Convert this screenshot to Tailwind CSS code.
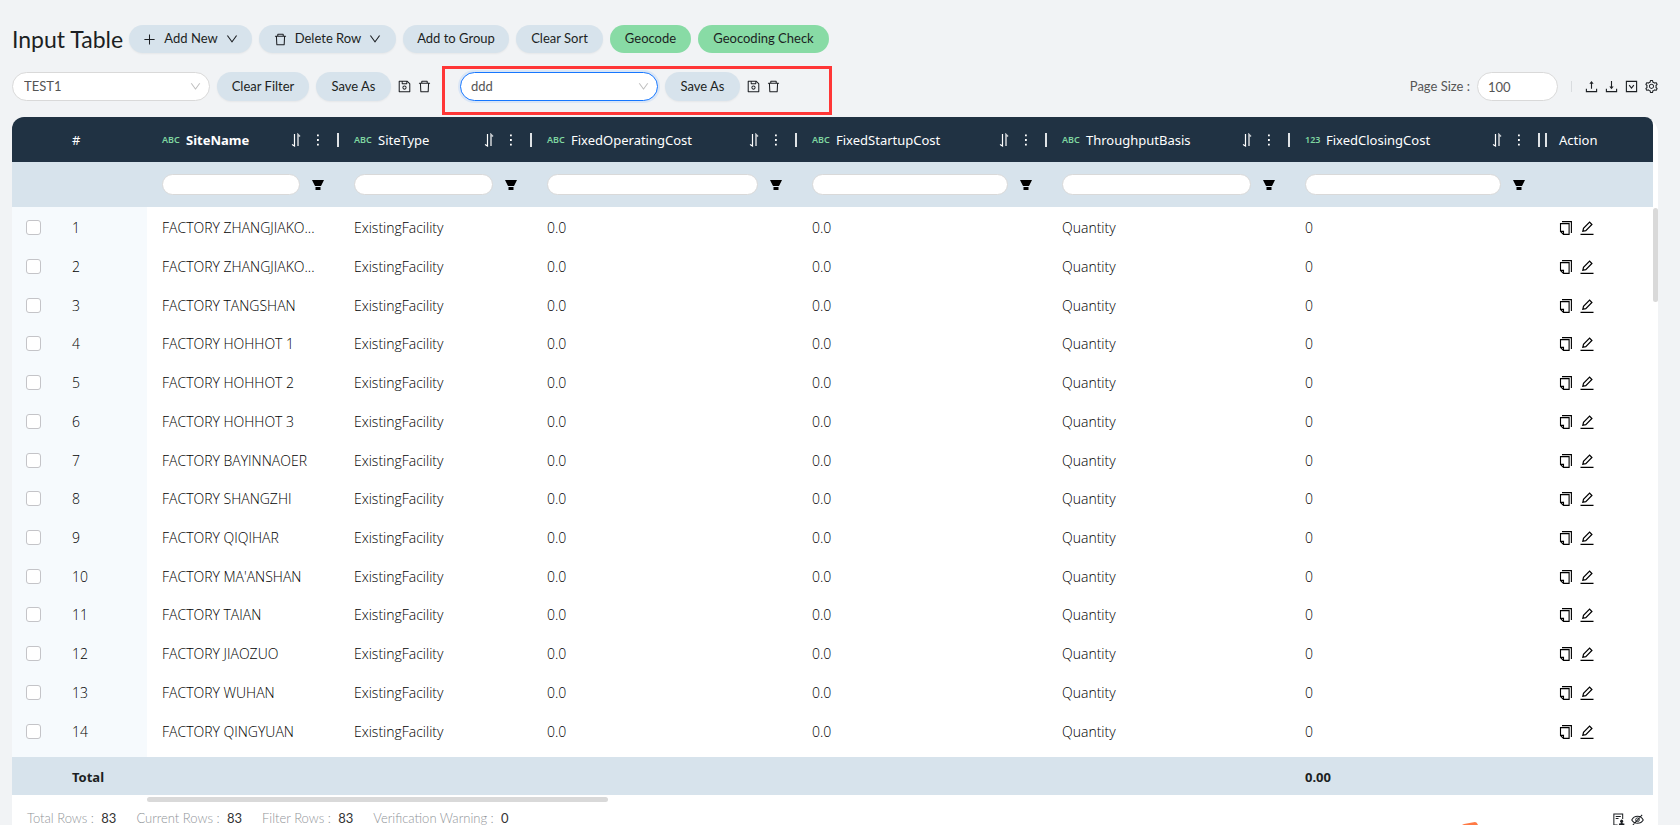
<!DOCTYPE html>
<html lang="en">
<head>
  <meta charset="UTF-8" />
  <meta name="viewport" content="width=device-width, initial-scale=1.0" />
  <script src="https://cdn.jsdelivr.net/npm/@tailwindcss/browser@4"></script>
  <title>Input Table</title>
</head>
<body class="h-screen overflow-hidden bg-[#f1f3f5] font-['Lato',sans-serif] text-[13px] text-[#1c1f23]">

  <!-- Icon sprite -->
  <svg class="hidden" aria-hidden="true">
    <symbol id="i-trash" viewBox="64 64 896 896"><path fill="currentColor" d="M360 184h-8c4.4 0 8-3.6 8-8v8h304v-8c0 4.4 3.6 8 8 8h-8v72h72v-80c0-35.3-28.7-64-64-64H352c-35.3 0-64 28.7-64 64v80h72v-72zm504 72H160c-17.7 0-32 14.3-32 32v32c0 4.4 3.6 8 8 8h60.4l24.7 523c1.6 34.1 29.8 61 63.9 61h454c34.2 0 62.3-26.8 63.9-61l24.7-523H888c4.4 0 8-3.6 8-8v-32c0-17.7-14.3-32-32-32zM731.3 840H292.7l-24.2-512h487l-24.2 512z"/></symbol>
    <symbol id="i-save" viewBox="64 64 896 896"><path fill="currentColor" d="M893.3 293.3L730.7 130.7c-7.5-7.5-16.7-13-26.7-16V112H144c-17.7 0-32 14.3-32 32v736c0 17.7 14.3 32 32 32h736c17.7 0 32-14.3 32-32V338.5c0-17-6.7-33.2-18.7-45.2zM384 184h256v104H384V184zm456 656H184V184h136v136c0 17.7 14.3 32 32 32h320c17.7 0 32-14.3 32-32V205.8l136 136V840zM512 442c-79.5 0-144 64.5-144 144s64.5 144 144 144 144-64.5 144-144-64.5-144-144-144zm0 224c-44.2 0-80-35.8-80-80s35.8-80 80-80 80 35.8 80 80-35.8 80-80 80z"/></symbol>
    <symbol id="i-down" viewBox="64 64 896 896"><path fill="currentColor" d="M884 256h-75c-5.1 0-9.9 2.5-12.9 6.6L512 654.2 227.9 262.6c-3-4.1-7.8-6.6-12.9-6.6h-75c-6.5 0-10.3 7.4-6.5 12.7l352.6 486.1c12.8 17.6 39 17.6 51.7 0l352.6-486.1c3.9-5.3.1-12.7-6.4-12.7z"/></symbol>
    <symbol id="i-plus" viewBox="0 0 14 14"><path fill="none" stroke="currentColor" stroke-width="1.1" d="M7 1.5v11M1.5 7h11"/></symbol>
    <symbol id="i-upload" viewBox="0 0 14 14"><path fill="none" stroke="currentColor" stroke-width="1.2" d="M1.500 9.500v3h11v-3M7 9.500V2.500"/><path fill="currentColor" d="M7 1l2.300 3H4.700z"/></symbol>
    <symbol id="i-download" viewBox="0 0 14 14"><path fill="none" stroke="currentColor" stroke-width="1.2" d="M1.500 9.500v3h11v-3M7 1v7"/><path fill="currentColor" d="M7 10L4.700 7h4.600z"/></symbol>
    <symbol id="i-box" viewBox="0 0 14 14"><path fill="none" stroke="currentColor" stroke-width="1.2" d="M1.500 1.500h11v11h-11zM4.500 5.500L7 8.700l2.500-3.200"/></symbol>
    <symbol id="i-gear" viewBox="64 64 896 896"><path fill="currentColor" d="M924.8 625.7l-65.5-56c3.1-19 4.7-38.4 4.7-57.8s-1.6-38.8-4.7-57.8l65.5-56a32.03 32.03 0 009.3-35.2l-.9-2.6a443.74 443.74 0 00-79.7-137.9l-1.8-2.1a32.12 32.12 0 00-35.1-9.5l-81.3 28.9c-30-24.6-63.5-44-99.7-57.6l-15.7-85a32.05 32.05 0 00-25.8-25.7l-2.7-.5c-52.1-9.4-106.9-9.4-159 0l-2.7.5a32.05 32.05 0 00-25.8 25.7l-15.8 85.4a351.86 351.86 0 00-99 57.4l-81.9-29.1a32 32 0 00-35.1 9.5l-1.8 2.1a446.02 446.02 0 00-79.7 137.9l-.9 2.6c-4.5 12.5-.8 26.5 9.3 35.2l66.3 56.6c-3.1 18.8-4.6 38-4.6 57.1 0 19.2 1.5 38.4 4.6 57.1L99 625.5a32.03 32.03 0 00-9.3 35.2l.9 2.6c18.1 50.4 44.9 96.9 79.7 137.9l1.8 2.1a32.12 32.12 0 0035.1 9.5l81.9-29.1c29.8 24.5 63.1 43.9 99 57.4l15.8 85.4a32.05 32.05 0 0025.8 25.7l2.7.5a449.4 449.4 0 00159 0l2.7-.5a32.05 32.05 0 0025.8-25.7l15.7-85a350 350 0 0099.7-57.6l81.3 28.9a32 32 0 0035.1-9.5l1.8-2.1c34.8-41.1 61.6-87.5 79.7-137.9l.9-2.6c4.5-12.3.8-26.3-9.3-35zM788.3 465.9c2.5 15.1 3.8 30.6 3.8 46.1s-1.3 31-3.8 46.1l-6.6 40.1 74.7 63.9a370.03 370.03 0 01-42.6 73.6L721 702.8l-31.4 25.8c-23.9 19.6-50.5 35-79.3 45.8l-38.1 14.3-17.9 97a377.5 377.5 0 01-85 0l-17.9-97.2-37.8-14.5c-28.5-10.8-55-26.2-78.7-45.7l-31.4-25.9-93.4 33.2c-17-22.9-31.2-47.6-42.6-73.6l75.5-64.5-6.5-40c-2.4-14.9-3.7-30.3-3.7-45.5 0-15.3 1.2-30.6 3.7-45.5l6.5-40-75.5-64.5c11.3-26.1 25.6-50.7 42.6-73.6l93.4 33.2 31.4-25.9c23.7-19.5 50.2-34.9 78.7-45.7l37.9-14.3 17.9-97.2c28.1-3.2 56.8-3.2 85 0l17.9 97 38.1 14.3c28.7 10.8 55.4 26.2 79.3 45.8l31.4 25.8 92.8-32.9c17 22.9 31.2 47.6 42.6 73.6L781.8 426l6.5 39.9zM512 326c-97.2 0-176 78.8-176 176s78.8 176 176 176 176-78.8 176-176-78.8-176-176-176zm79.2 255.2A111.6 111.6 0 01512 614c-29.9 0-58-11.7-79.2-32.8A111.6 111.6 0 01400 502c0-29.9 11.7-58 32.8-79.2C454 401.6 482.1 390 512 390c29.9 0 58 11.6 79.2 32.8A111.6 111.6 0 01624 502c0 29.9-11.7 58-32.8 79.2z"/></symbol>
    <symbol id="i-sort" viewBox="0 0 10 14"><path fill="none" stroke="currentColor" stroke-width="1.2" d="M3.500 1v12L1 11.500"/><path fill="none" stroke="currentColor" stroke-width="1.600" opacity=".75" d="M7 13V1.500L9 3.500"/></symbol>
    <symbol id="i-dots" viewBox="0 0 4 14"><path fill="currentColor" d="M1 1.500h1.800v1.800H1zM1 6.100h1.800v1.800H1zM1 10.700h1.800v1.800H1z"/></symbol>
    <symbol id="i-funnel" viewBox="0 0 12 12"><path fill="currentColor" d="M0 1h12L9 7H3zM3.500 8h5v3h-5z"/></symbol>
    <symbol id="i-copy" viewBox="0 0 14 14"><path fill="none" stroke="currentColor" stroke-width="1.1" d="M3 .6h9.400V12M1.500 2.600h8.600v10.800H4.500l-3-3zM1.500 10.400h3v3"/></symbol>
    <symbol id="i-edit" viewBox="0 0 14 14"><path fill="none" stroke="currentColor" stroke-width="1.200" d="M2.800 10.300l.7-3L9.600 1.200l2.300 2.300L5.800 9.600zM.5 13.300h13"/></symbol>
    <symbol id="i-audit" viewBox="0 0 14 14"><path fill="none" stroke="currentColor" stroke-width="1.100" d="M6 13H2V1h9.500v5.500M4 3.800h5.500M4 6h3"/><path fill="currentColor" d="M7.500 13.500v-2.200h1.500l.7-1a1.600 1.600 0 111.400 0l.6 1h1.600v2.200z"/></symbol>
    <symbol id="i-hidden" viewBox="0 0 14 14"><path fill="none" stroke="currentColor" stroke-width="1.100" d="M.8 7.500C3.500 2.300 10.500 2.300 13.200 7.500 10.500 12.200 3.500 12.200.8 7.500zM2 13L12 2"/><circle cx="7" cy="7.300" r="2" fill="none" stroke="currentColor"/></symbol>
  </svg>

  <div class="flex h-full flex-col pl-3 pr-[22px] pt-[25px]">

    <!-- Title + main actions -->
    <div class="flex h-7 items-center gap-[7px]">
      <h1 class="w-[110px] whitespace-nowrap text-[23px]">Input Table</h1>
      <button class="flex h-7 w-[123px] items-center justify-center gap-2 rounded-full bg-[#d7e3ec] shadow-xs"><svg class="size-[13px]"><use href="#i-plus" /></svg>Add New<svg class="size-3"><use href="#i-down" /></svg></button>
      <button class="flex h-7 w-[137px] items-center justify-center gap-2 rounded-full bg-[#d7e3ec] shadow-xs"><svg class="size-[13px]"><use href="#i-trash" /></svg>Delete Row<svg class="size-3"><use href="#i-down" /></svg></button>
      <button class="h-7 w-[106px] rounded-full bg-[#d7e3ec] shadow-xs">Add to Group</button>
      <button class="h-7 w-[87px] rounded-full bg-[#d7e3ec] shadow-xs">Clear Sort</button>
      <button class="h-7 w-[81px] rounded-full bg-[#88dba5]">Geocode</button>
      <button class="h-7 w-[131px] rounded-full bg-[#88dba5]">Geocoding Check</button>
    </div>

    <!-- Filters, saved sorts, page size -->
    <div class="mt-[13px] flex h-[49px] items-center">
      <div class="flex items-center gap-[7px] pb-2">
        <div class="relative">
          <select aria-label="Saved filter" class="h-[29px] w-[198px] appearance-none rounded-full border border-[#d9d9d9] bg-white px-[11px] text-[#555]"><option>TEST1</option></select>
          <svg class="pointer-events-none absolute right-[9px] top-[9px] size-[11px] text-[#bfbfbf]"><use href="#i-down" /></svg>
        </div>
        <button class="h-[29px] w-[92px] rounded-full bg-[#d7e3ec] shadow-xs">Clear Filter</button>
        <button class="h-[29px] w-[75px] rounded-full bg-[#d7e3ec] shadow-xs">Save As</button>
        <button aria-label="Save filter"><svg class="size-[13px]"><use href="#i-save" /></svg></button>
        <button aria-label="Delete filter"><svg class="size-[13px]"><use href="#i-trash" /></svg></button>
      </div>

      <div class="ml-[11px] flex h-[49px] w-[390px] items-center gap-[7px] border-3 border-[#ff3636] pb-2 pl-[15px]">
        <div class="relative">
          <select aria-label="Saved sort" class="h-[29px] w-[198px] appearance-none rounded-full border border-[#1677ff] bg-white px-[10px] text-[#555] ring-2 ring-[#1677ff]/10"><option>ddd</option></select>
          <svg class="pointer-events-none absolute right-[9px] top-[9px] size-[11px] text-[#bfbfbf]"><use href="#i-down" /></svg>
        </div>
        <button class="h-[29px] w-[75px] rounded-full bg-[#d7e3ec] shadow-xs">Save As</button>
        <button aria-label="Save sort"><svg class="size-[13px]"><use href="#i-save" /></svg></button>
        <button aria-label="Delete sort"><svg class="size-[13px]"><use href="#i-trash" /></svg></button>
      </div>

      <div class="ml-auto flex items-center gap-[7px] pb-2">
        <label for="pageSize" class="text-[#555]">Page Size :</label>
        <input id="pageSize" type="text" value="100" class="h-[29px] w-[81px] rounded-full border border-[#d9d9d9] bg-white px-[10px] text-[#555]">
        <span class="mx-[6px] h-[11px] w-px bg-[#d9dcdf]"></span>
        <button aria-label="Upload"><svg class="size-[13px]"><use href="#i-upload" /></svg></button>
        <button aria-label="Download"><svg class="size-[13px]"><use href="#i-download" /></svg></button>
        <button aria-label="Columns"><svg class="size-[13px]"><use href="#i-box" /></svg></button>
        <button aria-label="Settings"><svg class="size-[13px]"><use href="#i-gear" /></svg></button>
      </div>
    </div>

    <!-- Table card -->
    <div class="mt-[2px] flex flex-1 flex-col rounded-t-2xl bg-white">
      <div class="flex">
        <div class="min-w-0 flex-1 overflow-hidden rounded-tl-xl rounded-tr-lg">
          <table class="h-[678px] w-full table-fixed border-collapse text-left font-['Noto_Sans',sans-serif] text-[13px]">
            <colgroup>
              <col class="w-[45px]"><col class="w-[90px]"><col class="w-[192px]"><col class="w-[193px]"><col class="w-[265px]"><col class="w-[250px]"><col class="w-[243px]"><col class="w-[250px]"><col>
            </colgroup>
            <thead>
              <tr id="headRow" class="h-[45px] bg-[#203243] text-white">
                <td></td>
                <th class="pl-[15px] pt-[3px] font-normal">#</th>
              </tr>
              <tr id="filterRow" class="h-[45px] bg-[#d7e3ec]">
                <td></td>
                <td></td>
              </tr>
            </thead>
            <tbody id="rows" class="font-['Open_Sans',sans-serif] text-sm font-light text-black"></tbody>
            <tfoot>
              <tr class="h-[38px] bg-[#d7e3ec] font-bold">
                <td></td>
                <td class="pl-[15px] pt-1">Total</td>
                <td></td><td></td><td></td><td></td><td></td>
                <td class="pl-[15px] pt-1">0.00</td>
                <td></td>
              </tr>
            </tfoot>
          </table>
        </div>
        <!-- Vertical scrollbar -->
        <div class="w-[5px] pt-[91px]"><div class="h-[94px] rounded-full bg-[#d9d9d9]"></div></div>
      </div>

      <!-- Horizontal scrollbar -->
      <div class="ml-[135px] mt-[2px] h-[5px] w-[461px] rounded-full bg-[#d9d9d9]"></div>

      <!-- Row counters -->
      <div class="mt-[7px] flex h-5 items-center gap-5 pl-[15px] pr-[14px] text-[#909498]">
        <span><span class="font-light">Total Rows :</span> <span class="ml-1 text-[#333]">83</span></span>
        <span><span class="font-light">Current Rows :</span> <span class="ml-1 text-[#333]">83</span></span>
        <span><span class="font-light">Filter Rows :</span> <span class="ml-1 text-[#333]">83</span></span>
        <span><span class="font-light">Verification Warning :</span> <span class="ml-1 text-[#333]">0</span></span>
        <div class="ml-auto flex gap-[6px] text-[#1c1f23]">
          <button aria-label="Audit"><svg class="size-[13px]"><use href="#i-audit" /></svg></button>
          <button aria-label="Hide"><svg class="size-[13px]"><use href="#i-hidden" /></svg></button>
        </div>
      </div>
    </div>
  </div>

  <!-- Floating helper peeking in from below -->
  <svg class="fixed bottom-0 right-[202px] h-[3px] w-4 text-[#ff7a45]" viewBox="0 0 16 3"><path fill="currentColor" d="M0 3L2 2l11-2q2 0 3 3z"/></svg>

  <script>
    const columns = [
      ["ABC", "SiteName"],
      ["ABC", "SiteType"],
      ["ABC", "FixedOperatingCost"],
      ["ABC", "FixedStartupCost"],
      ["ABC", "ThroughputBasis"],
      ["123", "FixedClosingCost"],
    ];
    const sites = ["ZHANGJIAKO...", "ZHANGJIAKO...", "TANGSHAN", "HOHHOT 1", "HOHHOT 2", "HOHHOT 3", "BAYINNAOER", "SHANGZHI", "QIQIHAR", "MA'ANSHAN", "TAIAN", "JIAOZUO", "WUHAN", "QINGYUAN"];

    const headRow = document.getElementById("headRow");
    const filterRow = document.getElementById("filterRow");

    columns.forEach(([type, name], i) => {
      headRow.insertAdjacentHTML("beforeend", `
        <th class="pl-[15px] ${i === 0 ? "font-bold" : "font-normal"}">
          <div class="flex items-center">
            <span class="${type === "123" ? "w-[21px]" : "w-6"} pt-px text-[9px] font-semibold text-[#7fd6a0]">${type}</span>
            <span class="pt-[3px]">${name}</span>
            <button class="ml-auto" aria-label="Sort ${name}"><svg class="h-[14px] w-[10px]"><use href="#i-sort" /></svg></button>
            <button class="ml-[15px]" aria-label="${name} menu"><svg class="h-[14px] w-1"><use href="#i-dots" /></svg></button>
            <span class="ml-[17px] h-[14px] w-[2px] bg-[#dfe3e6]"></span>
          </div>
        </th>`);
      filterRow.insertAdjacentHTML("beforeend", `
        <td class="pl-[15px]">
          <div class="flex items-center gap-3 pr-[15px]">
            <input type="text" aria-label="Filter ${name}" class="h-[21px] min-w-0 flex-1 rounded-full border border-[#d9d9d9] bg-white px-2">
            <button aria-label="Filter options for ${name}"><svg class="size-3 text-black"><use href="#i-funnel" /></svg></button>
          </div>
        </td>`);
    });

    headRow.insertAdjacentHTML("beforeend", `
      <th class="pl-[5px] font-normal">
        <div class="flex items-center gap-3"><span class="h-[14px] w-[2px] bg-[#dfe3e6]"></span><span class="pt-[3px]">Action</span></div>
      </th>`);
    filterRow.insertAdjacentHTML("beforeend", `<td></td>`);

    const rows = document.getElementById("rows");
    sites.forEach((site, i) => {
      rows.insertAdjacentHTML("beforeend", `
        <tr>
          <td class="bg-[#f6fafd] pl-[14px] pt-[3px]"><input type="checkbox" aria-label="Select row ${i + 1}" class="block size-[15px] appearance-none rounded-[3px] border border-[#c4c4c8] bg-white"></td>
          <td class="bg-[#f6fafd] pl-[15px] pt-1">${i + 1}</td>
          <td class="whitespace-nowrap pl-[15px] pt-1">FACTORY ${site}</td>
          <td class="pl-[15px] pt-1">ExistingFacility</td>
          <td class="pl-[15px] pt-1">0.0</td>
          <td class="pl-[15px] pt-1">0.0</td>
          <td class="pl-[15px] pt-1">Quantity</td>
          <td class="pl-[15px] pt-1">0</td>
          <td class="pl-[19px] pt-1">
            <div class="flex gap-[7px]">
              <button aria-label="Copy row ${i + 1}"><svg class="size-[14px]"><use href="#i-copy" /></svg></button>
              <button aria-label="Edit row ${i + 1}"><svg class="size-[14px]"><use href="#i-edit" /></svg></button>
            </div>
          </td>
        </tr>`);
    });
    // strip of the next row, cut off by the totals
    rows.insertAdjacentHTML("beforeend", `<tr class="h-2"><td colspan="2" class="bg-[#f6fafd]"></td><td colspan="7"></td></tr>`);
  </script>
</body>
</html>
